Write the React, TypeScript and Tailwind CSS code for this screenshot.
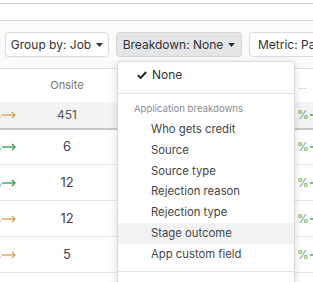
import React from "react";

const Arrow = ({ color }: { color: string }) => (
  <svg width="14" height="8" viewBox="0 0 14 8" fill="none" className="shrink-0">
    <path d="M0 4H13" stroke={color} strokeWidth="1.3" />
    <path d="M10 1L13 4L10 7" stroke={color} strokeWidth="1.3" />
  </svg>
);

const Caret = () => (
  <svg width="7" height="4" viewBox="0 0 7 4" className="ml-[5px] shrink-0">
    <path d="M0 0H7L3.5 4Z" fill="#333" />
  </svg>
);

const GREEN = "#2f9a4a";
const ORANGE = "#d9a04c";

type Row = { n: string; left: string };
const rows: Row[] = [
  { n: "6", left: GREEN },
  { n: "12", left: GREEN },
  { n: "12", left: ORANGE },
  { n: "5", left: ORANGE },
];

const LeftCell = ({ color }: { color: string }) => (
  <div className="flex items-center justify-end overflow-hidden pr-[4px]">
    <span className="text-[12px] leading-none shrink-0" style={{ color, opacity: 0.7 }}>0%</span>
    <Arrow color={color} />
  </div>
);

const RightCell = () => (
  <div className="flex items-center overflow-hidden pl-[1px]">
    <span className="text-[12px] leading-none shrink-0 text-[#4fae63]">%</span>
    <svg width="20" height="8" viewBox="0 0 20 8" fill="none" className="shrink-0 ml-[1px]">
      <path d="M0 4H20" stroke={GREEN} strokeWidth="1.3" />
    </svg>
  </div>
);

export default function App() {
  const items = [
    "Who gets credit",
    "Source",
    "Source type",
    "Rejection reason",
    "Rejection type",
    "Stage outcome",
    "App custom field",
  ];
  return (
    <div
      className="relative w-[313px] h-[282px] overflow-hidden bg-white text-[#333]"
      style={{ fontFamily: "Inter, 'Noto Sans', sans-serif" }}
    >
      <div className="mt-[3px] h-[18px] border-y border-[#d4d4d4]" />
      <div className="flex gap-[7px] px-[5px] pt-[11px] pb-[11px] bg-[#fbfbfb] whitespace-nowrap">
        <div className="flex items-center justify-center w-[104px] h-[25px] shrink-0 rounded-[4px] border border-[#dcdcdc] bg-white text-[12px] shadow-[0_1px_1px_rgba(0,0,0,0.04)]">
          Group by: Job
          <Caret />
        </div>
        <div className="flex items-center justify-center w-[126px] h-[25px] shrink-0 rounded-[4px] border border-[#d4d4d4] bg-[#e4e5e7] text-[12px]">
          Breakdown: None
          <Caret />
        </div>
        <div className="flex items-center pl-[8px] w-[120px] h-[25px] shrink-0 rounded-[4px] border border-[#dcdcdc] bg-white text-[12px]">
          Metric: Pass-through
        </div>
      </div>
      <div className="border-t border-[#dedede]">
        <div className="grid grid-cols-[20px_94px_182px_17px] h-[33px] items-center">
          <div />
          <div className="text-center text-[11px] text-[#777]">Onsite</div>
          <div />
          <div className="text-[10px] text-[#aaa] pl-[2px]">…</div>
        </div>
        <div className="grid grid-cols-[20px_94px_182px_17px] h-[28px] items-center bg-[#f3f3f3] border-b-2 border-[#c8c8c8] -mb-px">
          <LeftCell color={ORANGE} />
          <div className="text-center text-[12px] text-[#555]">451</div>
          <div />
          <RightCell />
        </div>
        {rows.map((r, i) => (
          <div
            key={i}
            className="grid grid-cols-[20px_94px_182px_17px] h-[36px] items-center border-b border-[#e3e3e6]"
          >
            <LeftCell color={r.left} />
            <div className="text-center text-[13px] text-[#444]">{r.n}</div>
            <div />
            <RightCell />
          </div>
        ))}
      </div>

      <div className="absolute left-[117px] top-[61px] w-[178px] h-[240px] bg-white border border-[#d9d9dd] rounded-[4px] shadow-[0_2px_8px_rgba(0,0,0,0.15)] pt-[3px]">
        <div className="flex items-center h-[20px] pl-[19px] text-[12px] text-[#333]">
          <svg width="10" height="8" viewBox="0 0 10 8" className="mr-[5px]">
            <path d="M0.8 4.2L3.6 7L9.2 1" stroke="#222" strokeWidth="1.9" fill="none" />
          </svg>
          None
        </div>
        <div className="mt-[8px] border-t border-[#e3e3e6]" />
        <div className="mt-[5px] h-[20px] flex items-center pl-[16px] text-[9.6px] text-[#8a8a90]">
          Application breakdowns
        </div>
        {items.map((t) => (
          <div
            key={t}
            className={`flex items-center h-[20.8px] pl-[33px] text-[11.3px] text-[#444] ${
              t === "Stage outcome" ? "bg-[#f1f2f4]" : ""
            }`}
          >
            {t}
          </div>
        ))}
        <div className="mt-[6px] border-t border-[#e3e3e6]" />
      </div>
    </div>
  );
}
